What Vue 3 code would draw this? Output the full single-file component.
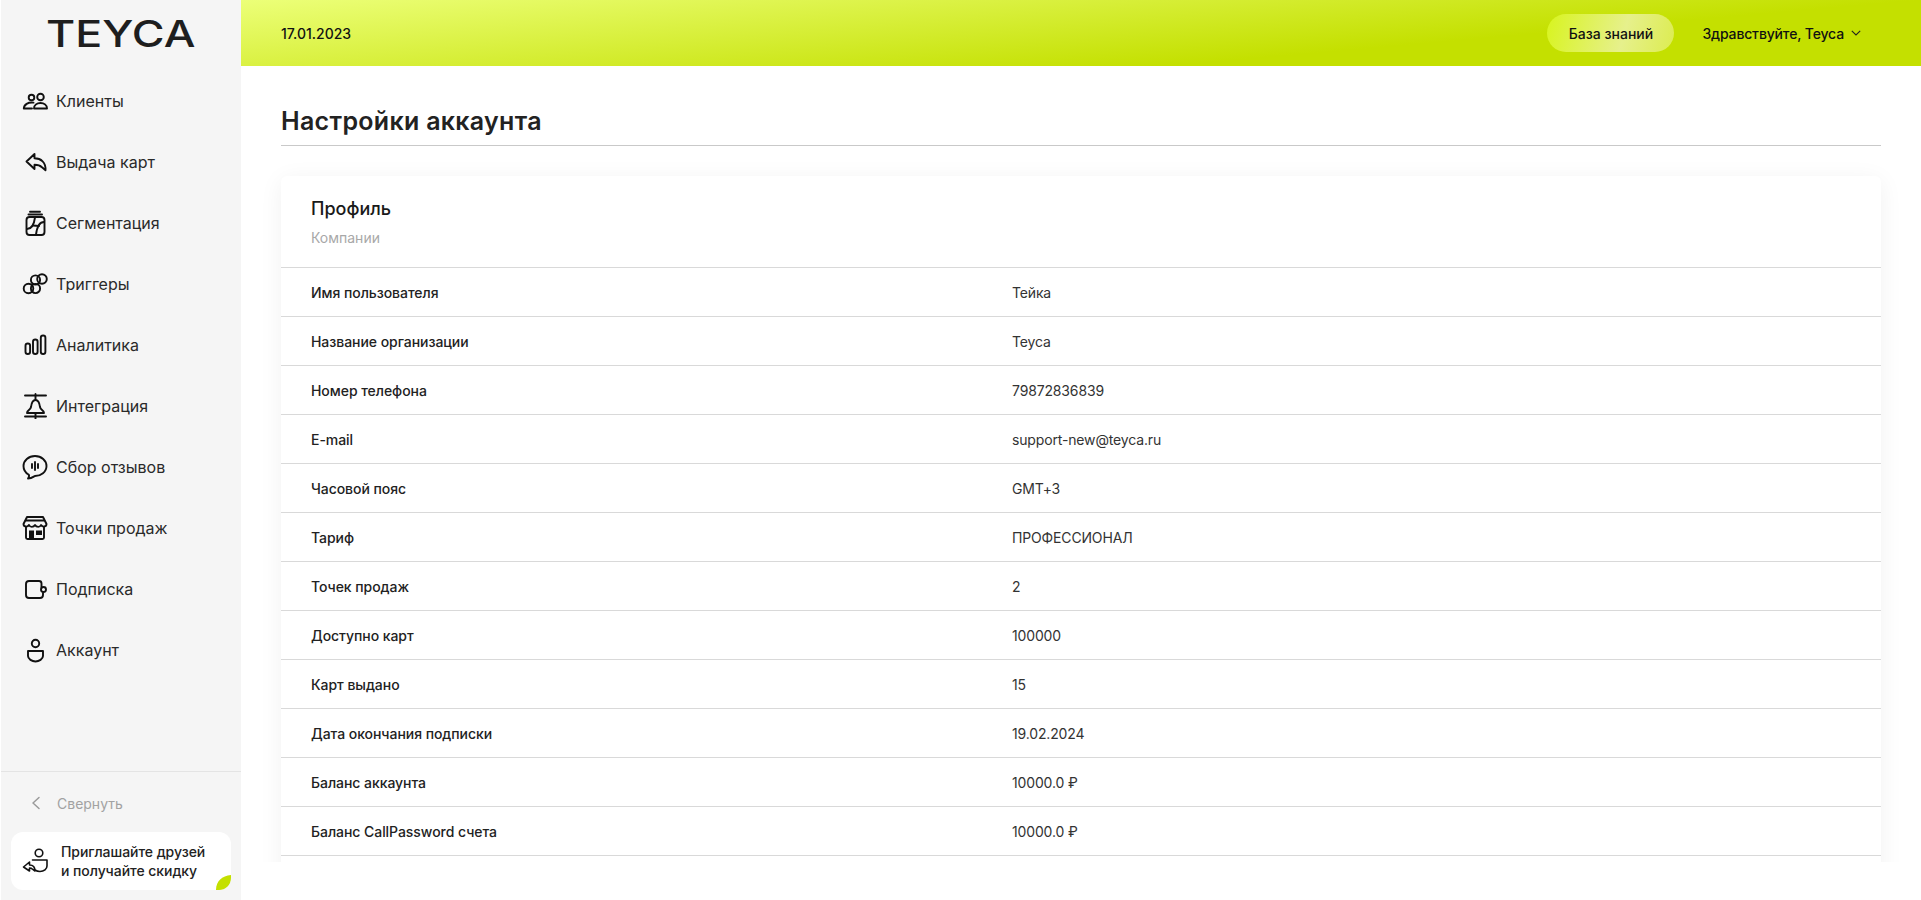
<script setup>
const c = (x, y, r) => `M${x - r} ${y}a${r} ${r} 0 1 0 ${2 * r} 0a${r} ${r} 0 1 0 ${-2 * r} 0Z`
const rr = (x, y, w, h, r) => `M${x + r} ${y}h${w - 2 * r}q${r} 0 ${r} ${r}v${h - 2 * r}q0 ${r} ${-r} ${r}h${-(w - 2 * r)}q${-r} 0 ${-r} ${-r}v${-(h - 2 * r)}q0 ${-r} ${r} ${-r}Z`

const menu = [
  { label: 'Клиенты', paths: [c(9.5, 9.5, 2.8), c(18.5, 9, 3.3), 'M12 20.5c0-3.5 3-5.5 6.5-5.5s6.5 2 6.5 5.5Z', 'M11.5 14.6C6 14 2 16.5 1.8 20.5H10'] },
  { label: 'Выдача карт', paths: ['M4.5 12.5 12.5 5v4.3c6.5 0 11.5 4 11 12l-3.5-3c-2-2-4.5-2.5-7.5-2.5V20Z'] },
  { label: 'Сегментация', paths: [rr(4.5, 7, 18, 18, 3), 'M8 1.8h10', 'M6.5 4.5h13.5', 'M5 19c4 0 7-4 8-11.500', 'M22 12c-4 0-7 5-8 12.500', 'M11 15.500 17 16'] },
  { label: 'Триггеры', paths: [c(20, 8, 4.8), c(13.5, 9, 4.6), c(6.5, 17.5, 4.8), c(13.5, 17.5, 4.6)] },
  { label: 'Аналитика', paths: [rr(3.5, 11.5, 4.6, 10.5, 2.3), rr(11, 7.5, 4.6, 14.5, 2.3), rr(18.8, 3.5, 4.6, 18.5, 2.3)] },
  { label: 'Интеграция', paths: ['M3 2.5H24', 'M3 23.5H24', 'M13.5 1v6', 'M13.5 20v6', 'M5 20c0-3 3.500-3 4-6 .5-4 2-7 4.500-7s4 3 4.500 7c.5 3 4 3 4 6Z'] },
  { label: 'Сбор отзывов', paths: ['M13 2c6.5 0 11.5 4.5 11.5 10 0 6-5.5 10-11.5 10-1 0-2.5 2.500-7 2.500 1.500-2 1-3.500.5-4C3 18.500 1.500 15.500 1.500 12 1.500 6.500 6.500 2 13 2Z', 'M13 8v8', 'M10 10v4', 'M16 10v4'] },
  { label: 'Точки продаж', paths: ['M5 2h16l3.5 7c0 3-4 3.500-5.500 1-1 2.500-4.500 2.500-6 0-1.500 2.500-5 2.500-6 0-1.500 2.500-5.500 2-5.500-1Z', 'M4 12v10.500q0 1.500 1.500 1.500h15q1.500 0 1.500-1.500V12', 'M4 5.500h18'], fills: ['M7 15.500h5V24H7Z', 'M14 15.500h6V20h-6Z'] },
  { label: 'Подписка', paths: ['M19.5 11V7.500Q19.5 5 17 5H7Q4 5 4 8v11q0 3 3 3h11q3 0 3-3v-2', c(21.5, 13.5, 2.5)] },
  { label: 'Аккаунт', paths: [c(13.5, 6.5, 3.7), 'M6 14h15v5c0 3-4 5.500-7.500 5.500S6 22 6 19Z'] },
]

const rows = [
  ['Имя пользователя', 'Тейка'],
  ['Название организации', 'Teyca'],
  ['Номер телефона', '79872836839'],
  ['E-mail', 'support-new@teyca.ru'],
  ['Часовой пояс', 'GMT+3'],
  ['Тариф', 'ПРОФЕССИОНАЛ'],
  ['Точек продаж', '2'],
  ['Доступно карт', '100000'],
  ['Карт выдано', '15'],
  ['Дата окончания подписки', '19.02.2024'],
  ['Баланс аккаунта', '10000.0 ₽'],
  ['Баланс CallPassword счета', '10000.0 ₽'],
]
</script>

<template>
  <div class="app">
    <aside class="sidebar">
      <div class="logo"><span>TEYCA</span></div>
      <nav class="menu">
        <a v-for="item in menu" :key="item.label" class="menu-item">
          <svg class="ico" width="26" height="26" viewBox="0 0 26 26">
            <path v-for="(d, i) in item.paths" :key="i" :d="d" />
            <path v-for="(d, i) in item.fills || []" :key="'f' + i" :d="d" class="solid" />
          </svg>
          <span>{{ item.label }}</span>
        </a>
      </nav>
      <div class="side-foot">
        <div class="collapse">
          <svg width="12" height="14" viewBox="0 0 12 14"><path d="M9 1.5 3 7l6 5.5" /></svg>
          <span>Свернуть</span>
        </div>
        <div class="invite">
          <svg class="ico thin" width="26" height="28" viewBox="0 0 26 28">
            <path :d="c(17, 6, 3.8)" />
            <path d="M10.500 13h14.500v6c0 3-3 5.500-7 5.500-2 0-3.500-.5-5-1.500" />
            <path d="M1.500 20 7.500 15v3c3 0 5.500 2 5.500 6l-2.500-1.800c-1-1-2-1.200-3-1.200v3Z" />
          </svg>
          <p>Приглашайте друзей<br />и получайте скидку</p>
          <svg class="leaf" width="15" height="15" viewBox="0 0 15 15"><path d="M0 15C0 6 6 1 15 0v5c0 6-3 10-10 10Z" /></svg>
        </div>
      </div>
    </aside>

    <div class="main">
      <header class="topbar">
        <span class="date">17.01.2023</span>
        <div class="top-right">
          <a class="kb">База знаний</a>
          <div class="user">
            <span>Здравствуйте, Teyca</span>
            <svg width="10" height="6" viewBox="0 0 10 6"><path d="M.8.8 5 5 9.2.8" /></svg>
          </div>
        </div>
      </header>

      <section class="content">
        <h1 class="title">Настройки аккаунта</h1>
        <div class="scroll">
          <div class="card">
            <div class="card-head">
              <h2>Профиль</h2>
              <p>Компании</p>
            </div>
            <div v-for="r in rows" :key="r[0]" class="row">
              <span class="key">{{ r[0] }}</span>
              <span class="val">{{ r[1] }}</span>
            </div>
          </div>
        </div>
      </section>
    </div>
  </div>
</template>

<style>
html, body { margin: 0; background: #fff; overflow: hidden; }
</style>

<style scoped>
.app {
  display: flex;
  height: 900px;
  font-family: Inter, "Noto Sans", sans-serif;
  color: #1d1d1d;
}
.sidebar {
  width: 240px;
  margin-left: 1px;
  flex: none;
  background: #f5f5f5;
  display: flex;
  flex-direction: column;
}
.logo {
  height: 66px;
  display: flex;
  align-items: center;
  justify-content: center;
}
.logo span {
  font-size: 37px;
  font-weight: 500;
  line-height: 1;
  color: #1e1e1e;
  transform: scaleX(1.21);
}
.menu {
  display: flex;
  flex-direction: column;
  padding-top: 4px;
}
.menu-item {
  height: 61px;
  display: flex;
  align-items: center;
  gap: 8px;
  padding-left: 21px;
  font-size: 16px;
  color: #2a2a2a;
}
.ico { flex: none; }
.ico path {
  fill: none;
  stroke: #111;
  stroke-width: 1.9;
  stroke-linejoin: round;
  stroke-linecap: round;
}
.ico path.solid { fill: #111; stroke: none; }
.ico.thin path { stroke-width: 1.6; }
.side-foot {
  margin-top: auto;
  border-top: 1px solid #e4e4e4;
  padding: 0 10px 10px;
}
.collapse {
  height: 60px;
  box-sizing: border-box;
  padding: 2px 0 0 19px;
  display: flex;
  align-items: center;
  gap: 15px;
  font-size: 14px;
  color: #a2a2a2;
}
.collapse path { fill: none; stroke: #9a9a9a; stroke-width: 1.5; stroke-linecap: round; stroke-linejoin: round; }
.invite {
  position: relative;
  height: 58px;
  background: #fff;
  border-radius: 12px;
  display: flex;
  align-items: center;
  gap: 13px;
  padding-left: 11px;
  overflow: hidden;
}
.invite p {
  margin: 0;
  font-size: 14px;
  line-height: 19px;
  font-weight: 500;
  letter-spacing: -0.05px;
  color: #222;
}
.leaf { position: absolute; right: 0; bottom: 0; }
.leaf path { fill: #c4e000; }
.main {
  flex: 1;
  min-width: 0;
  display: flex;
  flex-direction: column;
}
.topbar {
  height: 66px;
  flex: none;
  display: flex;
  align-items: center;
  justify-content: space-between;
  padding: 0 60px 0 40px;
  background: linear-gradient(175deg, #ecff78 0%, #c4e000 69%);
  font-size: 14px;
  font-weight: 500;
  color: #111;
}
.top-right { display: flex; align-items: center; gap: 28px; }
.kb {
  width: 127px;
  height: 38px;
  border-radius: 19px;
  display: flex;
  align-items: center;
  justify-content: center;
  background: linear-gradient(105deg, #d8f41e 0%, #e6f08c 60%, #dcec50 100%);
}
.user { display: flex; align-items: center; gap: 7px; letter-spacing: -0.15px; }
.user path { fill: none; stroke: #222; stroke-width: 1.1; }
.content {
  flex: 1;
  min-height: 0;
  display: flex;
  flex-direction: column;
  padding-bottom: 38px;
}
.title {
  margin: 0 40px;
  height: 80px;
  box-sizing: border-box;
  padding-top: 37px;
  border-bottom: 1px solid #c9c9c9;
  font-size: 25px;
  line-height: 36px;
  font-weight: 600;
  letter-spacing: 0.3px;
  color: #222;
}
.scroll {
  flex: 1;
  min-height: 0;
  overflow: hidden;
  padding: 30px 40px 0;
}
.card {
  background: #fff;
  border-radius: 6px;
  box-shadow: 0 4px 24px rgba(0, 0, 0, 0.06);
  padding-bottom: 40px;
}
.card-head {
  height: 91px;
  box-sizing: border-box;
  padding: 21px 30px 0;
}
.card-head h2 {
  margin: 0;
  font-size: 18px;
  line-height: 24px;
  font-weight: 500;
  color: #1a1a1a;
}
.card-head p {
  margin: 7px 0 0;
  font-size: 14px;
  line-height: 20px;
  color: #a8a8a8;
}
.row {
  height: 49px;
  box-sizing: border-box;
  border-top: 1px solid #d9d9d9;
  display: grid;
  grid-template-columns: 701px 1fr;
  align-items: center;
  padding: 0 30px;
  font-size: 14px;
}
.row:last-child { border-bottom: 1px solid #d9d9d9; height: 50px; }
.key { font-weight: 500; color: #222; letter-spacing: -0.05px; }
.val { color: #333; letter-spacing: -0.15px; }
</style>
